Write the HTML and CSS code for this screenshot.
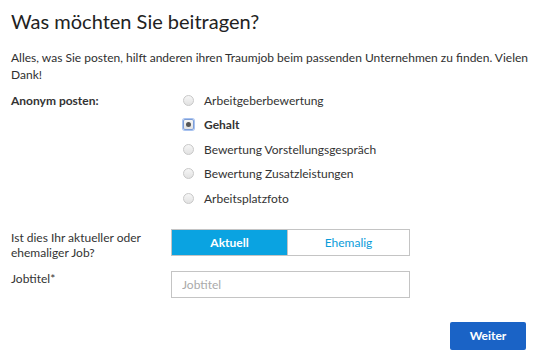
FILE: index.html
```html
<!DOCTYPE html>
<html lang="de">
<head>
    <meta charset="UTF-8">
    <title>Was möchten Sie beitragen?</title>
    <link rel="stylesheet" href="styles.css">
</head>
<body>
    <div class="container">
        <h1>Was möchten Sie beitragen?</h1>
        <p class="intro">Alles, was Sie posten, hilft anderen ihren Traumjob beim passenden Unternehmen zu finden. Vielen Dank!</p>

        <div class="form-row">
            <div class="form-label bold">Anonym posten:</div>
            <div class="radio-list">
                <label class="radio-item"><span class="radio"></span>Arbeitgeberbewertung</label>
                <label class="radio-item selected"><span class="radio checked"></span>Gehalt</label>
                <label class="radio-item"><span class="radio"></span>Bewertung Vorstellungsgespräch</label>
                <label class="radio-item"><span class="radio"></span>Bewertung Zusatzleistungen</label>
                <label class="radio-item"><span class="radio"></span>Arbeitsplatzfoto</label>
            </div>
        </div>

        <div class="form-row job-row">
            <div class="form-label">Ist dies Ihr aktueller oder ehemaliger Job?</div>
            <div class="toggle">
                <button class="toggle-btn active">Aktuell</button>
                <button class="toggle-btn">Ehemalig</button>
            </div>
        </div>

        <div class="form-row title-row">
            <div class="form-label">Jobtitel*</div>
            <input class="text-input" type="text" placeholder="Jobtitel">
        </div>

        <div class="actions">
            <button class="next-button">Weiter</button>
        </div>
    </div>
</body>
</html>
```

FILE: styles.css
```css
body {
    margin: 0;
    background: #fff;
    font-family: Lato, "Open Sans", sans-serif;
    color: #333;
}
.container {
    width: 515px;
    padding: 9px 0 0 11px;
}
h1 {
    margin: 0;
    font-size: 20px;
    font-weight: 400;
    color: #222;
    line-height: 24px;
}
.intro {
    width: 522px;
    margin: 16px 0 0;
    font-size: 12px;
    line-height: 17px;
    color: #2f2f2f;
}
.form-row {
    display: flex;
    align-items: flex-start;
}
.form-label {
    width: 160px;
    flex-shrink: 0;
    font-size: 12px;
    line-height: 15px;
}
.bold {
    font-weight: 700;
    padding-top: 10px;
}
.radio-list {
    display: flex;
    flex-direction: column;
    margin-top: 5px;
}
.radio-item {
    display: flex;
    align-items: center;
    height: 24.5px;
    font-size: 12px;
    color: #333;
}
.radio-item.selected {
    font-weight: 700;
}
.radio {
    width: 9px;
    height: 9px;
    border: 1px solid #c8c8c8;
    border-radius: 50%;
    background: linear-gradient(#f6f6f6, #e2e2e2);
    margin: 0 10px 0 12px;
    box-sizing: content-box;
}
.radio.checked {
    position: relative;
    border-color: #7d9ed8;
    border-radius: 2px;
    box-shadow: 0 0 0 1px #a9c3f0;
}
.radio.checked::after {
    content: "";
    position: absolute;
    left: 2px;
    top: 2px;
    width: 5px;
    height: 5px;
    border-radius: 50%;
    background: #555;
}
.job-row {
    margin-top: 18px;
}
.job-row .form-label {
    padding-top: 1px;
}
.toggle {
    display: flex;
    width: 239px;
    height: 27px;
    border: 1px solid #c4c4c4;
    box-sizing: border-box;
}
.toggle-btn {
    flex: 1;
    border: 0;
    background: #fff;
    font-family: inherit;
    font-size: 12px;
    font-weight: 400;
    color: #0a9cda;
    padding: 0;
}
.toggle-btn.active {
    flex: none;
    width: 115px;
    background: #0aa3e1;
    color: #fff;
    font-weight: 700;
}
.toggle-btn + .toggle-btn {
    border-left: 1px solid #c4c4c4;
}
.title-row {
    margin-top: 11px;
}
.title-row .form-label {
    line-height: 12px;
    padding-top: 2px;
}
.text-input {
    width: 239px;
    height: 27px;
    box-sizing: border-box;
    border: 1px solid #c4c4c4;
    padding: 0 10px;
    font-family: inherit;
    font-size: 12px;
    color: #333;
}
.text-input::placeholder {
    color: #aaa;
}
.actions {
    display: flex;
    justify-content: flex-end;
    margin-top: 24px;
}
.next-button {
    width: 76px;
    height: 28px;
    border: 0;
    border-radius: 2px;
    background: #1a63c6;
    color: #fff;
    font-family: inherit;
    font-size: 12px;
    font-weight: 700;
}
```
